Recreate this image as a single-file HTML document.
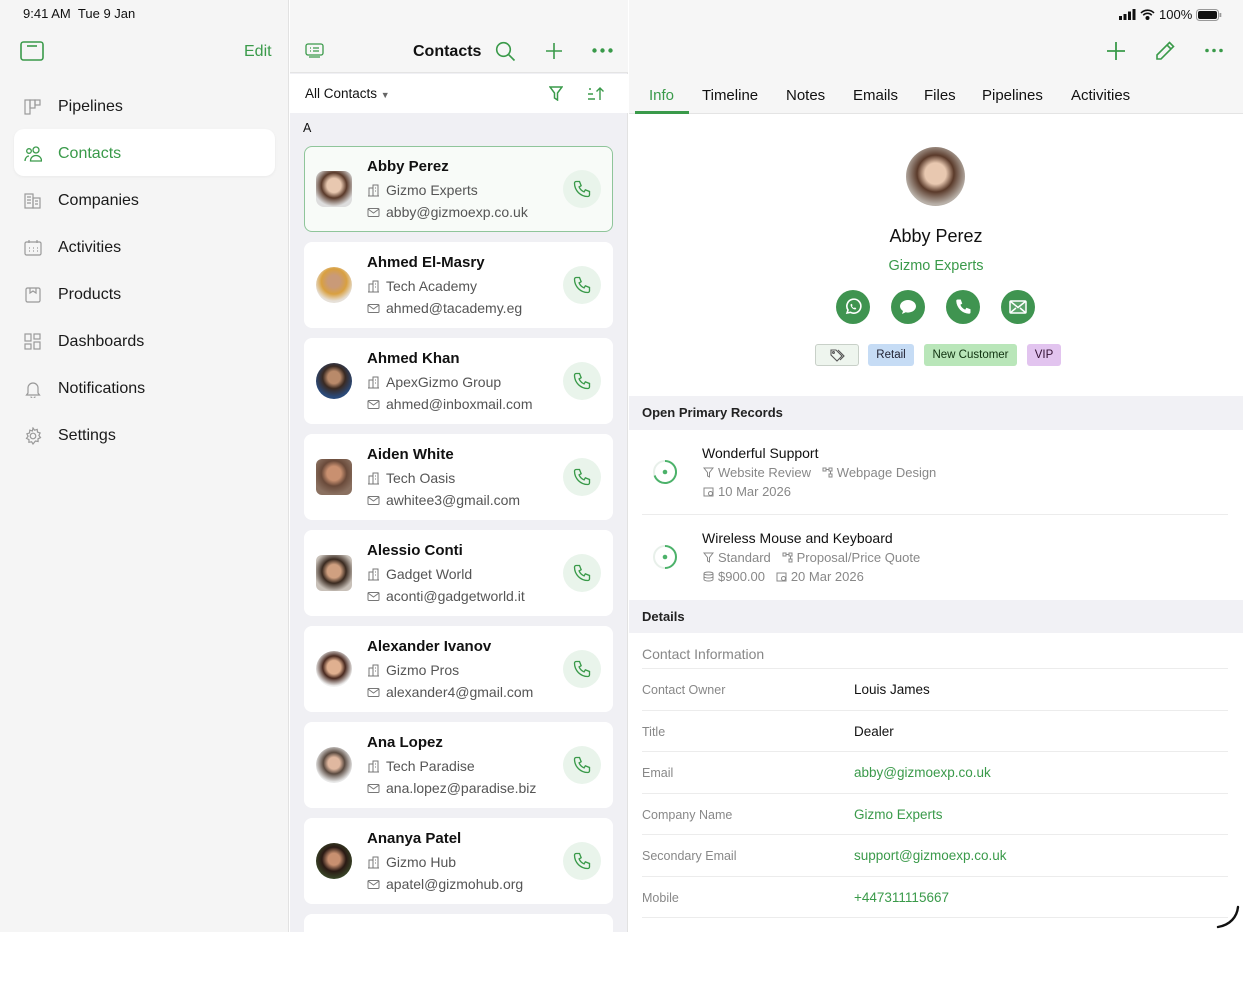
<!DOCTYPE html>
<html><head><meta charset="utf-8">
<style>
*{box-sizing:border-box;margin:0;padding:0}
body{width:1243px;height:932px;overflow:hidden;font-family:"Liberation Sans",sans-serif;background:#fff;position:relative;color:#111}
.a{position:absolute}
.g{color:#3a9a4a !important}
.side{left:0;top:0;width:289px;height:932px;background:#f5f5f5;border-right:1px solid #e2e2e2}
.nav{left:24px;font-size:16px;color:#1a1a1a;display:flex;align-items:center}
.nav svg{width:18px;height:18px;margin-right:16px}
.mid{left:290px;top:0;width:338px;height:932px;background:#f0f0f4;border-right:1px solid #e2e2e2}
.card{left:304px;width:309px;height:86px;background:#fff;border-radius:8px}
.card .nm{position:absolute;left:63px;top:12px;font-size:15px;font-weight:bold;color:#111}
.card .co,.card .em{position:absolute;left:63px;font-size:14px;color:#555;display:flex;align-items:center}
.card .co{top:36px}.card .em{top:58px}
.card svg.s{width:13px;height:13px;margin-right:6px}
.card .av{position:absolute;left:12px;top:25px;width:36px;height:36px;border-radius:50%}
.card .ph{position:absolute;left:259px;top:24px;width:38px;height:38px;border-radius:50%;background:#e9f4eb;display:flex;align-items:center;justify-content:center}
.tab{top:87px;font-size:15px;color:#111}
.row{left:642px;width:586px;height:41.5px;border-bottom:1px solid #ececec;font-size:12.5px}
.row .l{position:absolute;left:0;top:14px;color:#888}
.row .v{position:absolute;left:212px;top:13px;font-size:13.5px;color:#111}
.sub{font-size:13px;color:#888;display:flex;align-items:center}
.sub svg{width:11px;height:11px;margin-right:4px}
</style></head><body>

<div class="a side"></div>
<div class="a" style="left:23px;top:6px;font-size:13px;color:#111">9:41 AM&nbsp;&nbsp;Tue 9 Jan</div>
<svg class="a" style="left:20px;top:41px" width="24" height="20" viewBox="0 0 24 20"><rect x="1" y="1" width="22" height="18" rx="2.5" fill="none" stroke="#3a9a4a" stroke-width="1.6"/><line x1="7" y1="5" x2="17" y2="5" stroke="#3a9a4a" stroke-width="1.6"/></svg>
<div class="a g" style="left:244px;top:43px;font-size:16px">Edit</div>

<div class="a nav" style="top:98px"><svg viewBox="0 0 18 18" fill="none" stroke="#999" stroke-width="1.2"><rect x="1" y="2" width="5" height="14"/><rect x="6" y="2" width="5" height="8"/><rect x="11" y="2" width="5" height="5"/></svg>Pipelines</div>
<div class="a" style="left:14px;top:129px;width:261px;height:47px;background:#fff;border-radius:10px;box-shadow:0 1px 3px rgba(0,0,0,.05)"></div>
<div class="a nav" style="top:145px;color:#3a9a4a"><svg viewBox="0 0 18 18" fill="none" stroke="#3a9a4a" stroke-width="1.3"><circle cx="5" cy="6" r="2.3"/><circle cx="12" cy="5" r="3"/><path d="M1 16c0-3 2-5 4-5M6.5 16c0-3.5 2.5-5.5 5.5-5.5s5.5 2 5.5 5.5z"/></svg>Contacts</div>
<div class="a nav" style="top:192px"><svg viewBox="0 0 18 18" fill="none" stroke="#999" stroke-width="1.2"><rect x="1" y="2" width="8" height="14"/><rect x="9" y="6" width="7" height="10"/><path d="M3 5h4M3 8h4M3 11h4M11 9h3M11 12h3"/></svg>Companies</div>
<div class="a nav" style="top:239px"><svg viewBox="0 0 18 18" fill="none" stroke="#999" stroke-width="1.2"><rect x="1" y="3" width="16" height="13" rx="1.5"/><path d="M5 1v3M13 1v3M5 9h1M9 9h1M13 9h1M5 12h1M9 12h1M13 12h1"/></svg>Activities</div>
<div class="a nav" style="top:286px"><svg viewBox="0 0 18 18" fill="none" stroke="#999" stroke-width="1.2"><rect x="2" y="2" width="14" height="14" rx="1.5"/><path d="M6 2v5l3-2 3 2V2"/></svg>Products</div>
<div class="a nav" style="top:333px"><svg viewBox="0 0 18 18" fill="none" stroke="#999" stroke-width="1.2"><rect x="1" y="1" width="6" height="7"/><rect x="10" y="1" width="6" height="5"/><rect x="1" y="11" width="6" height="5"/><rect x="10" y="9" width="6" height="7"/></svg>Dashboards</div>
<div class="a nav" style="top:380px"><svg viewBox="0 0 18 18" fill="none" stroke="#999" stroke-width="1.2"><path d="M4 13V8a5 5 0 0 1 10 0v5l1.5 2h-13z M7 16.5a2 2 0 0 0 4 0"/></svg>Notifications</div>
<div class="a nav" style="top:427px"><svg viewBox="0 0 18 18" fill="none" stroke="#999" stroke-width="1.2"><circle cx="9" cy="9" r="2.8"/><path d="M9 1l1.6 2.2 2.6-.8.3 2.7 2.6.9-1.2 2.4 1.6 2.2-2.5 1.2.1 2.7-2.7-.5L9 17l-1.4-2.2-2.7.5.1-2.7L2.5 11.4 4.1 9.2 2.9 6.8l2.6-.9.3-2.7 2.6.8z"/></svg>Settings</div>

<!-- middle -->
<div class="a mid"></div>
<div class="a" style="left:290px;top:0;width:338px;height:73px;background:#f6f6f6;border-bottom:1px solid #e4e4e4"></div>
<svg class="a" style="left:305px;top:43px" width="19" height="15" viewBox="0 0 19 15" fill="none" stroke="#3a9a4a" stroke-width="1.3"><rect x="1" y="1" width="17" height="11" rx="2"/><path d="M4 14h11M5 5h1M8 5h6M5 8h1M8 8h6"/></svg>
<div class="a" style="left:413px;top:43px;font-size:16px;font-weight:bold">Contacts</div>
<svg class="a" style="left:495px;top:41px" width="21" height="21" viewBox="0 0 21 21" fill="none" stroke="#3a9a4a" stroke-width="1.6"><circle cx="8.5" cy="8.5" r="6.8"/><path d="M13.5 13.5l6 6"/></svg>
<svg class="a" style="left:545px;top:42px" width="18" height="18" viewBox="0 0 18 18" stroke="#3a9a4a" stroke-width="1.6"><path d="M9 1v16M1 9h16"/></svg>
<svg class="a" style="left:592px;top:48px" width="21" height="5" viewBox="0 0 21 5" fill="#3a9a4a"><circle cx="2.5" cy="2.5" r="2.2"/><circle cx="10.5" cy="2.5" r="2.2"/><circle cx="18.5" cy="2.5" r="2.2"/></svg>
<div class="a" style="left:290px;top:74px;width:338px;height:39px;background:#fff"></div>
<div class="a" style="left:305px;top:86px;font-size:13.5px">All Contacts <span style="font-size:9px;color:#666">▼</span></div>
<svg class="a" style="left:549px;top:86px" width="14" height="15" viewBox="0 0 14 15" fill="none" stroke="#3a9a4a" stroke-width="1.5"><path d="M1 1h12L8.5 7v7L5.5 12V7z"/></svg>
<svg class="a" style="left:587px;top:86px" width="18" height="15" viewBox="0 0 18 15" fill="none" stroke="#3a9a4a" stroke-width="1.4"><path d="M2 3h2M1 8h5M1 13h7M13 14V2M9.5 5.5L13 2l3.5 3.5"/></svg>
<div class="a" style="left:303px;top:121px;font-size:12.5px">A</div>

<!-- cards -->
<div class="a card" style="top:146px;border:1.5px solid #8fc59a;background:#f8fbf8"><div class="av" style="left:11px;top:24px;border-radius:8px;background:radial-gradient(circle at 50% 40%,#e8c8b0 0 25%,#5a3a2a 45%,#ddd 75%)"></div><div class="nm" style="left:62px;top:11px">Abby Perez</div><div class="co" style="left:62px;top:35px"><svg class="s" viewBox="0 0 13 13" fill="none" stroke="#777"><path d="M2 12V4h4v8M6 12V1h5v11M1 12h11M8 4h1M8 7h1"/></svg>Gizmo Experts</div><div class="em" style="left:62px;top:57px"><svg class="s" viewBox="0 0 13 13" fill="none" stroke="#777"><rect x="1" y="2.5" width="11" height="8" rx="1"/><path d="M1 3l5.5 4 5.5-4"/></svg>abby@gizmoexp.co.uk</div><div class="ph" style="left:258px;top:23px"><svg width="20" height="20" viewBox="0 0 24 24" fill="none" stroke="#3a9a4a" stroke-width="1.6"><path d="M5 3h4l2 5-2.5 1.5a11 11 0 0 0 6 6L16 13l5 2v4a2 2 0 0 1-2 2A16 16 0 0 1 3 5a2 2 0 0 1 2-2"/></svg></div></div>

<div class="a card" style="top:242px"><div class="av" style="background:radial-gradient(circle at 50% 40%,#c99a78 0 22%,#d9a040 45%,#e6e0d8 70%)"></div><div class="nm">Ahmed El-Masry</div><div class="co"><svg class="s" viewBox="0 0 13 13" fill="none" stroke="#777"><path d="M2 12V4h4v8M6 12V1h5v11M1 12h11M8 4h1M8 7h1"/></svg>Tech Academy</div><div class="em"><svg class="s" viewBox="0 0 13 13" fill="none" stroke="#777"><rect x="1" y="2.5" width="11" height="8" rx="1"/><path d="M1 3l5.5 4 5.5-4"/></svg>ahmed@tacademy.eg</div><div class="ph"><svg width="20" height="20" viewBox="0 0 24 24" fill="none" stroke="#3a9a4a" stroke-width="1.6"><path d="M5 3h4l2 5-2.5 1.5a11 11 0 0 0 6 6L16 13l5 2v4a2 2 0 0 1-2 2A16 16 0 0 1 3 5a2 2 0 0 1 2-2"/></svg></div></div>

<div class="a card" style="top:338px"><div class="av" style="background:radial-gradient(circle at 50% 40%,#b98a6a 0 22%,#3a2a22 40%,#2a4a7a 70%)"></div><div class="nm">Ahmed Khan</div><div class="co"><svg class="s" viewBox="0 0 13 13" fill="none" stroke="#777"><path d="M2 12V4h4v8M6 12V1h5v11M1 12h11M8 4h1M8 7h1"/></svg>ApexGizmo Group</div><div class="em"><svg class="s" viewBox="0 0 13 13" fill="none" stroke="#777"><rect x="1" y="2.5" width="11" height="8" rx="1"/><path d="M1 3l5.5 4 5.5-4"/></svg>ahmed@inboxmail.com</div><div class="ph"><svg width="20" height="20" viewBox="0 0 24 24" fill="none" stroke="#3a9a4a" stroke-width="1.6"><path d="M5 3h4l2 5-2.5 1.5a11 11 0 0 0 6 6L16 13l5 2v4a2 2 0 0 1-2 2A16 16 0 0 1 3 5a2 2 0 0 1 2-2"/></svg></div></div>

<div class="a card" style="top:434px"><div class="av" style="border-radius:6px;background:radial-gradient(circle at 50% 40%,#c99070 0 25%,#6a4a3a 45%,#8a7060 75%)"></div><div class="nm">Aiden White</div><div class="co"><svg class="s" viewBox="0 0 13 13" fill="none" stroke="#777"><path d="M2 12V4h4v8M6 12V1h5v11M1 12h11M8 4h1M8 7h1"/></svg>Tech Oasis</div><div class="em"><svg class="s" viewBox="0 0 13 13" fill="none" stroke="#777"><rect x="1" y="2.5" width="11" height="8" rx="1"/><path d="M1 3l5.5 4 5.5-4"/></svg>awhitee3@gmail.com</div><div class="ph"><svg width="20" height="20" viewBox="0 0 24 24" fill="none" stroke="#3a9a4a" stroke-width="1.6"><path d="M5 3h4l2 5-2.5 1.5a11 11 0 0 0 6 6L16 13l5 2v4a2 2 0 0 1-2 2A16 16 0 0 1 3 5a2 2 0 0 1 2-2"/></svg></div></div>

<div class="a card" style="top:530px"><div class="av" style="border-radius:6px;background:radial-gradient(circle at 50% 45%,#d0a080 0 25%,#3a2a20 45%,#c8c0b8 75%)"></div><div class="nm">Alessio Conti</div><div class="co"><svg class="s" viewBox="0 0 13 13" fill="none" stroke="#777"><path d="M2 12V4h4v8M6 12V1h5v11M1 12h11M8 4h1M8 7h1"/></svg>Gadget World</div><div class="em"><svg class="s" viewBox="0 0 13 13" fill="none" stroke="#777"><rect x="1" y="2.5" width="11" height="8" rx="1"/><path d="M1 3l5.5 4 5.5-4"/></svg>aconti@gadgetworld.it</div><div class="ph"><svg width="20" height="20" viewBox="0 0 24 24" fill="none" stroke="#3a9a4a" stroke-width="1.6"><path d="M5 3h4l2 5-2.5 1.5a11 11 0 0 0 6 6L16 13l5 2v4a2 2 0 0 1-2 2A16 16 0 0 1 3 5a2 2 0 0 1 2-2"/></svg></div></div>

<div class="a card" style="top:626px"><div class="av" style="background:radial-gradient(circle at 50% 45%,#e0b090 0 25%,#4a2a20 42%,#f0f0f0 70%)"></div><div class="nm">Alexander Ivanov</div><div class="co"><svg class="s" viewBox="0 0 13 13" fill="none" stroke="#777"><path d="M2 12V4h4v8M6 12V1h5v11M1 12h11M8 4h1M8 7h1"/></svg>Gizmo Pros</div><div class="em"><svg class="s" viewBox="0 0 13 13" fill="none" stroke="#777"><rect x="1" y="2.5" width="11" height="8" rx="1"/><path d="M1 3l5.5 4 5.5-4"/></svg>alexander4@gmail.com</div><div class="ph"><svg width="20" height="20" viewBox="0 0 24 24" fill="none" stroke="#3a9a4a" stroke-width="1.6"><path d="M5 3h4l2 5-2.5 1.5a11 11 0 0 0 6 6L16 13l5 2v4a2 2 0 0 1-2 2A16 16 0 0 1 3 5a2 2 0 0 1 2-2"/></svg></div></div>

<div class="a card" style="top:722px"><div class="av" style="background:radial-gradient(circle at 50% 45%,#e0b8a0 0 22%,#5a4a40 40%,#e8e8e8 70%)"></div><div class="nm">Ana Lopez</div><div class="co"><svg class="s" viewBox="0 0 13 13" fill="none" stroke="#777"><path d="M2 12V4h4v8M6 12V1h5v11M1 12h11M8 4h1M8 7h1"/></svg>Tech Paradise</div><div class="em"><svg class="s" viewBox="0 0 13 13" fill="none" stroke="#777"><rect x="1" y="2.5" width="11" height="8" rx="1"/><path d="M1 3l5.5 4 5.5-4"/></svg>ana.lopez@paradise.biz</div><div class="ph"><svg width="20" height="20" viewBox="0 0 24 24" fill="none" stroke="#3a9a4a" stroke-width="1.6"><path d="M5 3h4l2 5-2.5 1.5a11 11 0 0 0 6 6L16 13l5 2v4a2 2 0 0 1-2 2A16 16 0 0 1 3 5a2 2 0 0 1 2-2"/></svg></div></div>

<div class="a card" style="top:818px"><div class="av" style="background:radial-gradient(circle at 50% 45%,#c89070 0 22%,#2a1a14 45%,#3a4a2a 75%)"></div><div class="nm">Ananya Patel</div><div class="co"><svg class="s" viewBox="0 0 13 13" fill="none" stroke="#777"><path d="M2 12V4h4v8M6 12V1h5v11M1 12h11M8 4h1M8 7h1"/></svg>Gizmo Hub</div><div class="em"><svg class="s" viewBox="0 0 13 13" fill="none" stroke="#777"><rect x="1" y="2.5" width="11" height="8" rx="1"/><path d="M1 3l5.5 4 5.5-4"/></svg>apatel@gizmohub.org</div><div class="ph"><svg width="20" height="20" viewBox="0 0 24 24" fill="none" stroke="#3a9a4a" stroke-width="1.6"><path d="M5 3h4l2 5-2.5 1.5a11 11 0 0 0 6 6L16 13l5 2v4a2 2 0 0 1-2 2A16 16 0 0 1 3 5a2 2 0 0 1 2-2"/></svg></div></div>

<div class="a card" style="top:914px"></div>

<!-- right -->
<div class="a" style="left:629px;top:0;width:614px;height:114px;background:#f6f6f6;border-bottom:1px solid #e4e4e4"></div>
<div class="a" style="left:1119px;top:7px;display:flex;align-items:center;gap:4px;font-size:13px">
<svg width="17" height="11" viewBox="0 0 17 11" fill="#111"><rect x="0" y="7" width="3" height="4"/><rect x="4.5" y="5" width="3" height="6"/><rect x="9" y="2.5" width="3" height="8.5"/><rect x="13.5" y="0" width="3" height="11"/></svg>
<svg width="15" height="11" viewBox="0 0 15 11" fill="none" stroke="#111" stroke-width="1.6"><path d="M1 4a9 9 0 0 1 13 0M3.3 6.3a5.5 5.5 0 0 1 8.4 0"/><circle cx="7.5" cy="9" r="1.2" fill="#111"/></svg>
<span>100%</span>
<svg width="26" height="12" viewBox="0 0 26 12"><rect x="0.5" y="0.5" width="22" height="11" rx="3" fill="none" stroke="#999"/><rect x="2" y="2" width="19" height="8" rx="2" fill="#111"/><rect x="23.5" y="4" width="1.8" height="4" fill="#999"/></svg></div>
<svg class="a" style="left:1106px;top:41px" width="20" height="20" viewBox="0 0 20 20" stroke="#3a9a4a" stroke-width="1.8"><path d="M10 1v18M1 10h18"/></svg>
<svg class="a" style="left:1155px;top:41px" width="20" height="20" viewBox="0 0 20 20" fill="none" stroke="#3a9a4a" stroke-width="1.6"><path d="M14.5 1.5l4 4L6 18H2v-4zM12 4l4 4"/></svg>
<svg class="a" style="left:1205px;top:48px" width="18" height="5" viewBox="0 0 18 5" fill="#3a9a4a"><circle cx="2" cy="2.5" r="1.8"/><circle cx="9" cy="2.5" r="1.8"/><circle cx="16" cy="2.5" r="1.8"/></svg>

<div class="a tab g" style="left:649px">Info</div>
<div class="a" style="left:635px;top:111px;width:54px;height:3px;background:#3a9a4a"></div>
<div class="a tab" style="left:702px">Timeline</div>
<div class="a tab" style="left:786px">Notes</div>
<div class="a tab" style="left:853px">Emails</div>
<div class="a tab" style="left:924px">Files</div>
<div class="a tab" style="left:982px">Pipelines</div>
<div class="a tab" style="left:1071px">Activities</div>

<div class="a" style="left:906px;top:147px;width:59px;height:59px;border-radius:50%;background:radial-gradient(circle at 50% 45%,#e8c8b0 0 24%,#5a3a2a 42%,#b8b0a8 70%)"></div>
<div class="a" style="left:629px;top:226px;width:614px;text-align:center;font-size:18px">Abby Perez</div>
<div class="a g" style="left:629px;top:258px;width:614px;text-align:center;font-size:14.5px">Gizmo Experts</div>

<div class="a" style="left:836px;top:290px;width:34px;height:34px;border-radius:50%;background:#3f9450;display:flex;align-items:center;justify-content:center"><svg width="18" height="18" viewBox="0 0 18 18" fill="none" stroke="#fff" stroke-width="1.6"><path d="M3 15l1-3a7 7 0 1 1 2.5 2.3z"/><path d="M6.5 6.5c0 2.5 2.5 5 5 5l.8-1.3-1.5-.8-.8.7c-1-.5-1.6-1.1-2.1-2.1l.7-.8-.8-1.5z" fill="#fff" stroke="none"/></svg></div>
<div class="a" style="left:891px;top:290px;width:34px;height:34px;border-radius:50%;background:#3f9450;display:flex;align-items:center;justify-content:center"><svg width="18" height="18" viewBox="0 0 18 18" fill="#fff"><path d="M9 2c4.4 0 8 2.8 8 6.3s-3.6 6.3-8 6.3c-.8 0-1.6-.1-2.3-.3L3 16l1-3C2.2 11.8 1 10.2 1 8.3 1 4.8 4.6 2 9 2z"/></svg></div>
<div class="a" style="left:946px;top:290px;width:34px;height:34px;border-radius:50%;background:#3f9450;display:flex;align-items:center;justify-content:center"><svg width="18" height="18" viewBox="0 0 24 24" fill="#fff"><path d="M5 2h4l2 5.5-2.5 1.5a11 11 0 0 0 6.5 6.5L16.5 13l5.5 2v4a2 2 0 0 1-2 2A18 18 0 0 1 3 4a2 2 0 0 1 2-2"/></svg></div>
<div class="a" style="left:1001px;top:290px;width:34px;height:34px;border-radius:50%;background:#3f9450;display:flex;align-items:center;justify-content:center"><svg width="18" height="14" viewBox="0 0 18 14" fill="none" stroke="#fff" stroke-width="1.5"><rect x="1" y="1" width="16" height="12" rx="1" fill="#fff" fill-opacity=".15"/><path d="M1 1l8 6.5L17 1M1 13l6-5M17 13l-6-5"/></svg></div>

<div class="a" style="left:815px;top:344px;width:44px;height:22px;border:1px solid #c8d0c8;background:#eef5ee;border-radius:3px;display:flex;align-items:center;justify-content:center"><svg width="15" height="13" viewBox="0 0 15 13" fill="none" stroke="#555" stroke-width="1.1"><path d="M1 6V1h5l6 6-5 5z"/><circle cx="3.5" cy="3.5" r="0.9"/><path d="M8 1l6 6-4 4"/></svg></div>
<div class="a" style="left:868px;top:344px;width:46px;height:22px;background:#c6dcf5;border-radius:3px;font-size:11.5px;text-align:center;line-height:22px;color:#223">Retail</div>
<div class="a" style="left:924px;top:344px;width:93px;height:22px;background:#b9e6b9;border-radius:3px;font-size:11.5px;text-align:center;line-height:22px;color:#131">New Customer</div>
<div class="a" style="left:1027px;top:344px;width:34px;height:22px;background:#e2c4ef;border-radius:3px;font-size:11.5px;text-align:center;line-height:22px;color:#313">VIP</div>

<div class="a" style="left:629px;top:396px;width:614px;height:34px;background:#f1f1f5"></div>
<div class="a" style="left:642px;top:405px;font-size:13px;font-weight:bold;color:#222">Open Primary Records</div>

<svg class="a" style="left:652px;top:459px" width="26" height="26" viewBox="0 0 26 26"><circle cx="13" cy="13" r="11" fill="none" stroke="#e8f0ea" stroke-width="2"/><path d="M13 2a11 11 0 1 1-10.4 14.5" fill="none" stroke="#4cb26a" stroke-width="2"/><circle cx="13" cy="13" r="2.3" fill="#4cb26a"/></svg>
<div class="a" style="left:702px;top:445px;font-size:14px">Wonderful Support</div>
<div class="a sub" style="left:703px;top:465px"><svg viewBox="0 0 11 11" fill="none" stroke="#888"><path d="M1 1h9L6.5 5.5V10L4.5 9V5.5z"/></svg>Website Review&nbsp;&nbsp;&nbsp;<svg viewBox="0 0 11 11" fill="none" stroke="#888"><rect x="1" y="1" width="3" height="3"/><rect x="7" y="1" width="3" height="3"/><rect x="7" y="7" width="3" height="3"/><path d="M4 2.5h3M8.5 4v3"/></svg>Webpage Design</div>
<div class="a sub" style="left:703px;top:484px"><svg viewBox="0 0 11 11" fill="none" stroke="#888"><rect x="1" y="2" width="9" height="8"/><circle cx="7.5" cy="7.5" r="2"/></svg>10 Mar 2026</div>
<div class="a" style="left:642px;top:514px;width:586px;height:1px;background:#ececec"></div>
<svg class="a" style="left:652px;top:544px" width="26" height="26" viewBox="0 0 26 26"><circle cx="13" cy="13" r="11" fill="none" stroke="#e8f0ea" stroke-width="2"/><path d="M13 2a11 11 0 0 1 0 22" fill="none" stroke="#4cb26a" stroke-width="2"/><circle cx="13" cy="13" r="2.3" fill="#4cb26a"/></svg>
<div class="a" style="left:702px;top:530px;font-size:14px">Wireless Mouse and Keyboard</div>
<div class="a sub" style="left:703px;top:550px"><svg viewBox="0 0 11 11" fill="none" stroke="#888"><path d="M1 1h9L6.5 5.5V10L4.5 9V5.5z"/></svg>Standard&nbsp;&nbsp;&nbsp;<svg viewBox="0 0 11 11" fill="none" stroke="#888"><rect x="1" y="1" width="3" height="3"/><rect x="7" y="1" width="3" height="3"/><rect x="7" y="7" width="3" height="3"/><path d="M4 2.5h3M8.5 4v3"/></svg>Proposal/Price Quote</div>
<div class="a sub" style="left:703px;top:569px"><svg viewBox="0 0 11 11" fill="none" stroke="#888"><ellipse cx="5.5" cy="2.5" rx="4.5" ry="1.5"/><path d="M1 2.5v6c0 .8 2 1.5 4.5 1.5s4.5-.7 4.5-1.5v-6M1 5.5c0 .8 2 1.5 4.5 1.5s4.5-.7 4.5-1.5"/></svg>$900.00&nbsp;&nbsp;&nbsp;<svg viewBox="0 0 11 11" fill="none" stroke="#888"><rect x="1" y="2" width="9" height="8"/><circle cx="7.5" cy="7.5" r="2"/></svg>20 Mar 2026</div>

<div class="a" style="left:629px;top:600px;width:614px;height:33px;background:#f1f1f5"></div>
<div class="a" style="left:642px;top:609px;font-size:13px;font-weight:bold;color:#222">Details</div>
<div class="a" style="left:642px;top:646px;font-size:14px;color:#888">Contact Information</div>
<div class="a" style="left:642px;top:668px;width:586px;height:1px;background:#ececec"></div>

<div class="a row" style="top:669px"><div class="l">Contact Owner</div><div class="v">Louis James</div></div>
<div class="a row" style="top:710.5px"><div class="l">Title</div><div class="v">Dealer</div></div>
<div class="a row" style="top:752px"><div class="l">Email</div><div class="v g">abby@gizmoexp.co.uk</div></div>
<div class="a row" style="top:793.5px"><div class="l">Company Name</div><div class="v g">Gizmo Experts</div></div>
<div class="a row" style="top:835px"><div class="l">Secondary Email</div><div class="v g">support@gizmoexp.co.uk</div></div>
<div class="a row" style="top:876.5px"><div class="l">Mobile</div><div class="v g">+447311115667</div></div>
<svg class="a" style="left:1215px;top:905px" width="26" height="24" viewBox="0 0 26 24" fill="none" stroke="#111" stroke-width="2.4" stroke-linecap="round"><path d="M23 2c-1 10-8 18-20 20"/></svg>
</body></html>
